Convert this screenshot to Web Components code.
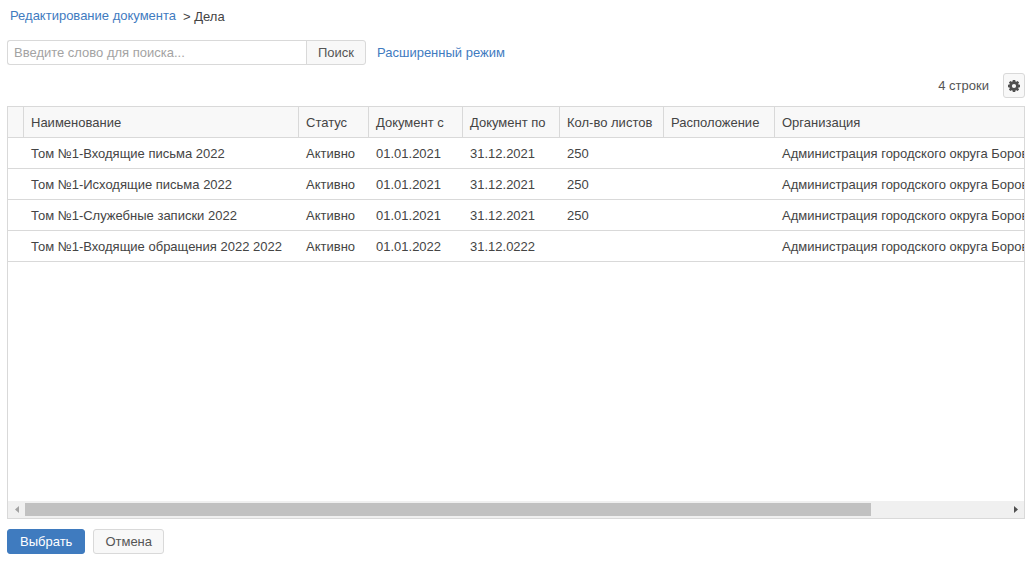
<!DOCTYPE html>
<html lang="ru">
<head>
<meta charset="utf-8">
<title>Дела</title>
<style>
  body { margin: 0; font: 13px/16px "Liberation Sans", Arial, sans-serif; color: #444; background: #fff; }
</style>
</head>
<body>
<case-picker></case-picker>

<script>
const define = (name, html, setup) => {
  const template = document.createElement('template');
  template.innerHTML = html;
  customElements.define(name, class extends HTMLElement {
    constructor() {
      super();
      this.attachShadow({ mode: 'open' }).append(template.content.cloneNode(true));
    }
    connectedCallback() { if (setup) setup(this, this.shadowRoot); }
  });
};

define('ui-link', `
  <style>
    :host { display: inline-block; }
    a { color: #3f7bbf; text-decoration: none; }
    a:hover { text-decoration: underline; }
  </style>
  <a href="#"><slot></slot></a>`);

define('ui-button', `
  <style>
    :host { display: inline-block; }
    button {
      box-sizing: border-box; display: flex; align-items: center; justify-content: center;
      height: 25px; padding: 0 11px; margin: 0;
      font: inherit; color: #555; background: #f8f8f8;
      border: 1px solid #d9d9d9; border-radius: 3px; cursor: pointer;
    }
    :host([primary]) button { padding: 0 12px; color: #fff; background: #3f7bbf; border-color: #3f7bbf; }
    :host([icon]) button { width: 22px; padding: 0; }
  </style>
  <button type="button"><slot></slot></button>`, (host, root) => {
    const label = host.getAttribute('label');
    if (label) root.querySelector('button').setAttribute('aria-label', label);
  });

define('bread-crumbs', `
  <style>
    :host { display: block; }
    nav { display: flex; gap: 7px; padding: 0 3px; }
    span { padding-top: 1px; }
  </style>
  <nav aria-label="Навигация">
    <slot></slot>
    <span>&gt; <slot name="current"></slot></span>
  </nav>`);

define('search-box', `
  <style>
    :host { display: block; }
    form { display: flex; align-items: center; }
    input {
      box-sizing: border-box; width: 300px; height: 25px; padding: 0 6px; margin: 0;
      font: inherit; color: #444; background: #fff;
      border: 1px solid #d9d9d9; border-right: 0; border-radius: 3px 0 0 3px; outline: 0;
    }
    input::placeholder { color: #a3a3a3; opacity: 1; }
    button {
      box-sizing: border-box; width: 60px; height: 25px; padding: 0; margin: 0 11px 0 -1px;
      font: inherit; color: #555; background: #f8f8f8;
      border: 1px solid #d9d9d9; border-radius: 0 3px 3px 0;
    }
  </style>
  <form>
    <input type="text" placeholder="Введите слово для поиска..." aria-label="Поиск">
    <button type="button">Поиск</button>
    <slot></slot>
  </form>`);

define('scroll-bar', `
  <style>
    :host { display: flex; height: 17px; background: #f0f0f0; }
    button {
      width: 17px; height: 17px; padding: 0; border: 0; background: none; color: #505050;
      display: flex; align-items: center; justify-content: center;
    }
    button:disabled { color: #a3a3a3; }
    .track { flex: 1; display: flex; padding: 2px 0; }
    .thumb { background: #c1c1c1; }
  </style>
  <button type="button" class="back" aria-label="Влево" disabled>
    <svg width="4" height="7" viewBox="0 0 4 7"><path fill="currentColor" d="M4 0v7L0 3.5z"/></svg>
  </button>
  <div class="track"><div class="thumb"></div></div>
  <button type="button" class="next" aria-label="Вправо">
    <svg width="4" height="7" viewBox="0 0 4 7"><path fill="currentColor" d="M0 0v7l4-3.5z"/></svg>
  </button>`);

define('case-grid', `
  <style>
    :host { display: flex; flex-direction: column; border: 1px solid #d9d9d9; min-width: 0; }
    .view { flex: 1; overflow-x: auto; scrollbar-width: none; }
    table { table-layout: fixed; width: 1180px; border-collapse: separate; border-spacing: 0; }
    th, td {
      box-sizing: border-box; height: 31px; padding: 2px 7px 0;
      border-bottom: 1px solid #d9d9d9; text-align: left; font-weight: normal; white-space: nowrap;
    }
    th { background: #f8f8f8; border-right: 1px solid #d9d9d9; }
    th:first-child, td:first-child { padding: 0; }
  </style>
  <div class="view">
    <table>
      <colgroup></colgroup>
      <thead><tr></tr></thead>
      <tbody></tbody>
    </table>
  </div>
  <scroll-bar></scroll-bar>`, (host, root) => {
    const org = 'Администрация городского округа Боровский';
    const columns = [['', 16], ['Наименование', 275], ['Статус', 70], ['Документ с', 94],
      ['Документ по', 97], ['Кол-во листов', 104], ['Расположение', 111], ['Организация', 413]];
    const rows = [
      ['', 'Том №1-Входящие письма 2022', 'Активно', '01.01.2021', '31.12.2021', '250', '', org],
      ['', 'Том №1-Исходящие письма 2022', 'Активно', '01.01.2021', '31.12.2021', '250', '', org],
      ['', 'Том №1-Служебные записки 2022', 'Активно', '01.01.2021', '31.12.2021', '250', '', org],
      ['', 'Том №1-Входящие обращения 2022 2022', 'Активно', '01.01.2022', '31.12.0222', '', '', org]
    ];
    root.querySelector('colgroup').innerHTML = columns.map(c => `<col style="width:${c[1]}px">`).join('');
    root.querySelector('thead tr').innerHTML = columns.map(c => c[0] ? `<th scope="col">${c[0]}</th>` : '<th></th>').join('');
    root.querySelector('tbody').innerHTML = rows.map(r => `<tr>${r.map(c => `<td>${c}</td>`).join('')}</tr>`).join('');

    const view = root.querySelector('.view');
    const bar = root.querySelector('scroll-bar').shadowRoot;
    const track = bar.querySelector('.track'), thumb = bar.querySelector('.thumb');
    const back = bar.querySelector('.back'), next = bar.querySelector('.next');
    const sync = () => {
      const scale = track.clientWidth / view.scrollWidth;
      thumb.style.width = Math.round(view.clientWidth * scale) + 'px';
      thumb.style.marginLeft = Math.round(view.scrollLeft * scale) + 'px';
      back.disabled = view.scrollLeft <= 0;
      next.disabled = view.scrollLeft + view.clientWidth >= view.scrollWidth;
    };
    back.onclick = () => { view.scrollLeft -= 40; };
    next.onclick = () => { view.scrollLeft += 40; };
    view.addEventListener('scroll', sync);
    new ResizeObserver(sync).observe(view);
    sync();
  });

define('case-picker', `
  <style>
    :host { box-sizing: border-box; display: flex; flex-direction: column; min-height: 100vh; padding: 8px 6px 8px 7px; }
    search-box { margin-top: 15px; }
    .tools { display: flex; align-items: center; justify-content: flex-end; gap: 14px; margin: 8px 0; color: #555; }
    case-grid { flex: 1; }
    footer { display: flex; gap: 8px; margin-top: 10px; }
    svg { display: block; }
  </style>
  <bread-crumbs>
    <ui-link>Редактирование документа</ui-link>
    <span slot="current">Дела</span>
  </bread-crumbs>
  <search-box><ui-link>Расширенный режим</ui-link></search-box>
  <div class="tools">
    <span>4 строки</span>
    <ui-button icon label="Настройки">
      <svg width="12" height="12" viewBox="0 0 12 12" aria-hidden="true">
        <path fill="#505050" fill-rule="evenodd" d="M4.800 0h2.400l.3 1.500.8.3 1.300-.9 1.500 1.500-.9 1.300.3.8L12 4.800v2.400l-1.500.3-.3.8.9 1.300-1.500 1.500-1.300-.9-.8.3L7.200 12H4.800l-.3-1.500-.8-.3-1.300.9L.9 9.600l.9-1.300-.3-.8L0 7.200V4.800l1.500-.3.3-.8L.9 2.400 2.400.9l1.300.9.8-.3zM6 3.900a2.100 2.100 0 1 0 0 4.200 2.100 2.100 0 0 0 0-4.200z"/>
      </svg>
    </ui-button>
  </div>
  <case-grid></case-grid>
  <footer>
    <ui-button primary>Выбрать</ui-button>
    <ui-button>Отмена</ui-button>
  </footer>`);
</script>
</body>
</html>
